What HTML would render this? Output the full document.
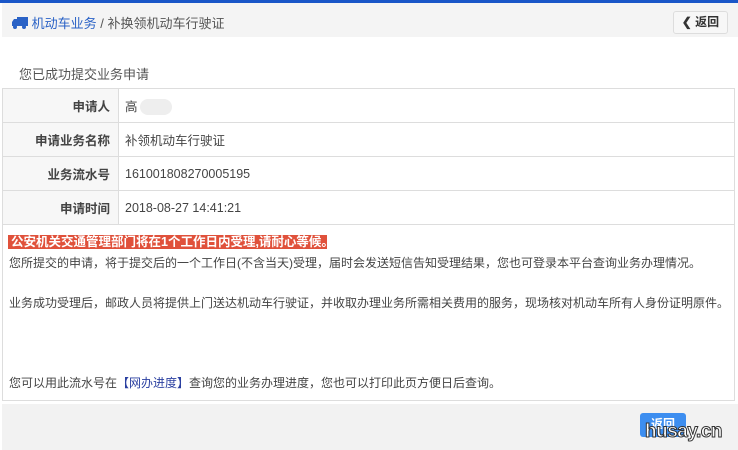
<!DOCTYPE html>
<html><head><meta charset="utf-8"><style>
*{margin:0;padding:0;box-sizing:border-box}
body{width:738px;height:450px;background:#fff;font-family:"Liberation Sans","Noto Sans CJK SC",sans-serif;font-size:12px;color:#333;position:relative;overflow:hidden}
.top{position:absolute;left:0;top:0;width:738px;height:3px;background:#1a56c8}
.hdr{position:absolute;left:2px;top:3px;width:736px;height:34px;background:#f4f4f4}
.crumb{position:absolute;left:10px;top:10px;font-size:13px;color:#555;white-space:nowrap}
.crumb .b{color:#2a62c6}
.back{position:absolute;left:671px;top:8px;width:55px;height:23px;border:1px solid #ddd;border-radius:3px;background:#f7f7f7;font-size:12px;font-weight:bold;color:#333;line-height:21px;text-align:center}
.title{position:absolute;left:19px;top:64px;font-size:13px;color:#555}
table{position:absolute;left:2px;top:88px;width:733px;border-collapse:collapse}
td{border:1px solid #ddd;height:34px;font-size:12.5px}
td.l{width:116px;background:#f7f7f7;text-align:right;padding-right:8px;font-weight:bold;color:#444}
td.v{padding-left:6px;color:#444}
.box{position:absolute;left:2px;top:224px;width:733px;height:177px;border:1px solid #ddd;border-top:none}
.red{position:absolute;left:8px;top:235px;background:#e0513b;color:#fff;font-weight:bold;font-size:12.5px;padding:0 3px;line-height:14px;white-space:nowrap;width:319px;overflow:hidden}
.p{position:absolute;left:9px;font-size:12px;color:#444;white-space:nowrap}
.foot{position:absolute;left:2px;top:404px;width:736px;height:46px;background:#f2f2f2}
.btn{position:absolute;left:640px;top:413px;width:46px;height:24px;background:#3d8ef0;border-radius:3px;color:#fff;font-weight:bold;text-align:center;line-height:22px;font-size:12px}
.wm{position:absolute;left:645px;top:421px;font-size:19px;font-weight:bold;color:#fff;-webkit-text-stroke:1px #333;font-family:"Liberation Sans",sans-serif;letter-spacing:-0.5px}
</style></head><body>
<div class="top"></div>
<div class="hdr">
<div class="crumb"><svg width="16" height="12" viewBox="0 0 16 12" style="vertical-align:-1px"><rect x="5" y="0" width="11" height="9" fill="#2a62c6"/><path d="M0 5 L2 2 H5 V9 H0Z" fill="#2a62c6"/><circle cx="3" cy="10" r="2" fill="#2a62c6"/><circle cx="12" cy="10" r="2" fill="#2a62c6"/></svg> <span class="b">机动车业务</span> / 补换领机动车行驶证</div>
<div class="back">&#10094; 返回</div>
</div>
<div class="title">您已成功提交业务申请</div>
<table>
<tr><td class="l">申请人</td><td class="v">高<span style="display:inline-block;width:32px;height:16px;background:#eee;border-radius:8px;vertical-align:middle;margin-left:2px"></span></td></tr>
<tr><td class="l">申请业务名称</td><td class="v">补领机动车行驶证</td></tr>
<tr><td class="l">业务流水号</td><td class="v">161001808270005195</td></tr>
<tr><td class="l">申请时间</td><td class="v">2018-08-27 14:41:21</td></tr>
</table>
<div class="box"></div>
<div class="red">公安机关交通管理部门将在1个工作日内受理,请耐心等候。</div>
<div class="p" style="top:254px">您所提交的申请，将于提交后的一个工作日(不含当天)受理，届时会发送短信告知受理结果，您也可登录本平台查询业务办理情况。</div>
<div class="p" style="top:294px">业务成功受理后，邮政人员将提供上门送达机动车行驶证，并收取办理业务所需相关费用的服务，现场核对机动车所有人身份证明原件。</div>
<div class="p" style="top:374px">您可以用此流水号在<span style="color:#2a3fa0">【网办进度】</span>查询您的业务办理进度，您也可以打印此页方便日后查询。</div>
<div class="foot"></div>
<div class="btn">返回</div>
<div class="wm">husay.cn</div>
</body></html>
